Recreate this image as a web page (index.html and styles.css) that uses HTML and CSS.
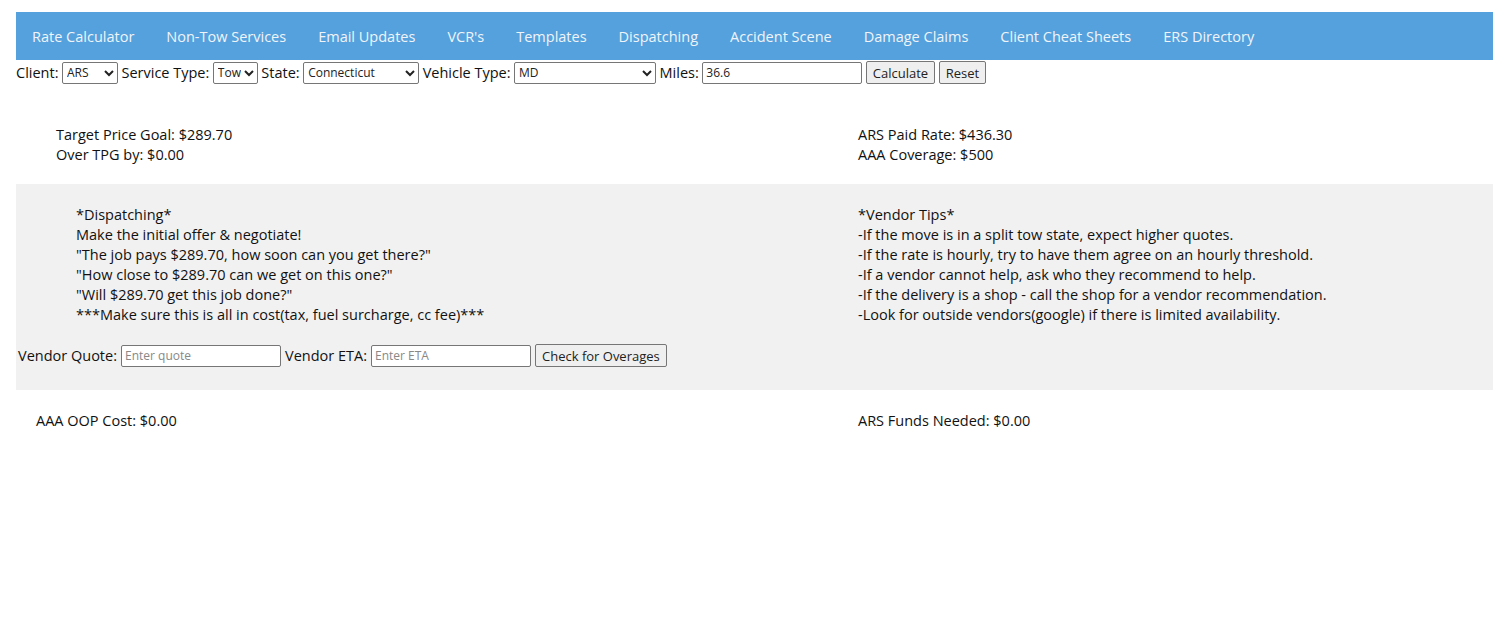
FILE: index.html
```html
<!DOCTYPE html>
<html>
<head>
<meta charset="utf-8">
<link rel="stylesheet" href="styles.css">
</head>
<body>
<div class="page">
  <nav class="nav">
    <a>Rate Calculator</a>
    <a>Non-Tow Services</a>
    <a>Email Updates</a>
    <a>VCR's</a>
    <a>Templates</a>
    <a>Dispatching</a>
    <a>Accident Scene</a>
    <a>Damage Claims</a>
    <a>Client Cheat Sheets</a>
    <a>ERS Directory</a>
  </nav>
  <div class="controls">
    <label>Client:</label>
    <select class="sel-client"><option>ARS</option></select>
    <label>Service Type:</label>
    <select class="sel-service"><option>Tow</option></select>
    <label>State:</label>
    <select class="sel-state"><option>Connecticut</option></select>
    <label>Vehicle Type:</label>
    <select class="sel-vehicle"><option>MD</option></select>
    <label>Miles:</label>
    <input class="inp-miles" type="text" value="36.6">
    <button class="btn">Calculate</button>
    <button class="btn">Reset</button>
  </div>
  <section class="row top">
    <div class="col left">
      <div>Target Price Goal: $289.70</div>
      <div>Over TPG by: $0.00</div>
    </div>
    <div class="col right">
      <div>ARS Paid Rate: $436.30</div>
      <div>AAA Coverage: $500</div>
    </div>
  </section>
  <section class="row gray">
    <div class="col left">
      <div class="disp">
        <div>*Dispatching*</div>
        <div>Make the initial offer &amp; negotiate!</div>
        <div>"The job pays $289.70, how soon can you get there?"</div>
        <div>"How close to $289.70 can we get on this one?"</div>
        <div>"Will $289.70 get this job done?"</div>
        <div>***Make sure this is all in cost(tax, fuel surcharge, cc fee)***</div>
      </div>
      <div class="vendor">
        <label>Vendor Quote:</label>
        <input class="inp-v" type="text" placeholder="Enter quote">
        <label>Vendor ETA:</label>
        <input class="inp-v" type="text" placeholder="Enter ETA">
        <button class="btn">Check for Overages</button>
      </div>
    </div>
    <div class="col right">
      <div>*Vendor Tips*</div>
      <div>-If the move is in a split tow state, expect higher quotes.</div>
      <div>-If the rate is hourly, try to have them agree on an hourly threshold.</div>
      <div>-If a vendor cannot help, ask who they recommend to help.</div>
      <div>-If the delivery is a shop - call the shop for a vendor recommendation.</div>
      <div>-Look for outside vendors(google) if there is limited availability.</div>
    </div>
  </section>
  <section class="row bottom">
    <div class="col left">
      <div>AAA OOP Cost: $0.00</div>
    </div>
    <div class="col right">
      <div>ARS Funds Needed: $0.00</div>
    </div>
  </section>
</div>
</body>
</html>
```
FILE: styles.css
```css
html, body {
  margin: 0;
  padding: 0;
  background: #ffffff;
}
body {
  font-family: "Open Sans", "Noto Sans", sans-serif;
  font-size: 14.5px;
  line-height: 20px;
  color: #111111;
}
.page {
  padding: 12px 0 0 16px;
}
.nav {
  display: flex;
  box-sizing: border-box;
  height: 48px;
  padding-top: 2px;
  align-items: center;
  background: #54a1dd;
}
.nav a {
  padding: 0 16px;
  font-size: 14.5px;
  color: #f0f4f8;
  white-space: nowrap;
}
.controls {
  display: flex;
  align-items: center;
  gap: 3.5px;
  height: 23px;
  margin-top: 1px;
}
.controls label, .vendor label {
  white-space: nowrap;
}
select, input, .btn {
  font-family: "Open Sans", "Noto Sans", sans-serif;
  font-size: 12px;
  box-sizing: border-box;
  height: 22px;
  margin: 0;
}
select {
  border: 1px solid #767676;
  border-radius: 2px;
  background: #fff;
  color: #222;
  padding: 0;
}
.sel-client { width: 56px; }
.sel-service { width: 45px; }
.sel-state { width: 116px; }
.sel-vehicle { width: 142px; }
input {
  border: 1px solid #767676;
  border-radius: 2px;
  padding: 0 3px;
  background: #fff;
  color: #222;
}
.inp-miles { width: 160px; }
.btn {
  border: 1px solid #767676;
  border-radius: 2px;
  background: #efefef;
  color: #222;
  font-size: 13px;
  padding: 0 6px;
  height: 23px;
}
.row {
  display: grid;
  grid-template-columns: 842px 1fr;
}
.top {
  padding: 41px 0 19px;
}
.top .left { padding-left: 40px; }
.gray {
  background: #f1f1f1;
  padding: 21px 0 23px;
}
.disp {
  padding-left: 60px;
}
.vendor {
  display: flex;
  align-items: center;
  gap: 4px;
  margin-top: 19px;
  padding-left: 2px;
}
.inp-v { width: 160px; }
.inp-v::placeholder { color: #888; }
.bottom {
  padding-top: 21px;
}
.bottom .left { padding-left: 20px; }
```
